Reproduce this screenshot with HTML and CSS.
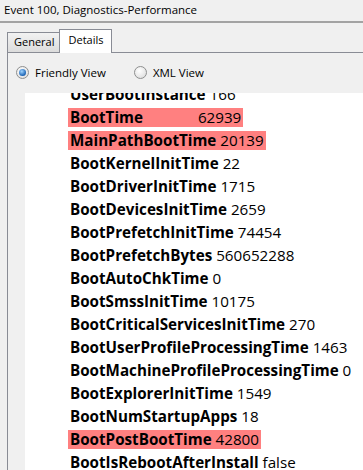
FILE: index.html
```html
<!doctype html>
<html>
<head>
<meta name="viewport" content="width=device-width">
<link rel="stylesheet" href="styles.css">
</head>
<body>
<div class="title">Event 100, Diagnostics-Performance</div>
<div class="tabs">
  <span class="tab">General</span>
  <span class="tab on">Details</span>
</div>
<div class="panel">
  <div class="views">
    <label class="view"><span class="radio checked"></span>Friendly View</label>
    <label class="view"><span class="radio"></span>XML View</label>
  </div>
  <div class="xml">
    <div class="list">
      <div class="row"><span class="item"><b>UserBootInstance</b> 166</span></div>
      <div class="row"><span class="item hot"><b>BootTime</b> <span class="far">62939</span></span></div>
      <div class="row"><span class="item hot"><b>MainPathBootTime</b> 20139</span></div>
      <div class="row"><span class="item"><b>BootKernelInitTime</b> 22</span></div>
      <div class="row"><span class="item"><b>BootDriverInitTime</b> 1715</span></div>
      <div class="row"><span class="item"><b>BootDevicesInitTime</b> 2659</span></div>
      <div class="row"><span class="item"><b>BootPrefetchInitTime</b> 74454</span></div>
      <div class="row"><span class="item"><b>BootPrefetchBytes</b> 560652288</span></div>
      <div class="row"><span class="item"><b>BootAutoChkTime</b> 0</span></div>
      <div class="row"><span class="item"><b>BootSmssInitTime</b> 10175</span></div>
      <div class="row"><span class="item"><b>BootCriticalServicesInitTime</b> 270</span></div>
      <div class="row"><span class="item"><b>BootUserProfileProcessingTime</b> 1463</span></div>
      <div class="row"><span class="item"><b>BootMachineProfileProcessingTime</b> 0</span></div>
      <div class="row"><span class="item"><b>BootExplorerInitTime</b> 1549</span></div>
      <div class="row"><span class="item"><b>BootNumStartupApps</b> 18</span></div>
      <div class="row"><span class="item hot"><b>BootPostBootTime</b> 42800</span></div>
      <div class="row"><span class="item"><b>BootIsRebootAfterInstall</b> false</span></div>
    </div>
  </div>
</div>
</body>
</html>
```
FILE: styles.css
```css
html,body{margin:0; padding:0; height:100%; overflow:hidden}
body{display:flex; flex-direction:column; background:#f0f0f0; color:#000; font:normal 11.5px "Open Sans", "DejaVu Sans", sans-serif}
.title{flex:none; height:21px; line-height:20px; padding-left:4px; border-bottom:2px solid #a3a3a3; white-space:nowrap}
.tabs{flex:none; display:flex; align-items:flex-end; padding:6px 0 0 7px; height:23px; position:relative; z-index:1; font-size:11px}
.tab{box-sizing:border-box; height:20px; line-height:18px; padding:0 5px 0 6px; border:1px solid #898c95; border-bottom:none; background:linear-gradient(#f2f2f2,#dcdcdc)}
.tab.on{height:24px; line-height:20px; margin-bottom:-1px; background:#fff; padding:0 8px; margin-left:-1px}
.panel{flex:1; display:flex; flex-direction:column; margin-left:7px; border-left:1px solid #898c95; border-top:1px solid #898c95; min-height:0}
.views{flex:none; display:flex; align-items:center; height:38px; margin-bottom:2px; padding-left:8px}
.view{display:flex; align-items:center; margin-right:28px}
.radio{box-sizing:border-box; width:13px; height:13px; border-radius:50%; border:1px solid #8e8f8f; background:radial-gradient(circle at 40% 35%, #fff, #d8d8d8); margin-right:6px; display:flex; align-items:center; justify-content:center}
.radio.checked::after{content:""; width:7px; height:7px; border-radius:50%; background:radial-gradient(circle at 40% 35%, #9fd4ff, #1a62b4 70%, #0e3f7d)}
.xml{flex:1; background:#fff; margin-left:17px; overflow:hidden}
.list{margin-top:-10px; padding-left:43px; font:normal 15.2px "Open Sans", sans-serif}
.row{height:23px; display:flex; align-items:center; white-space:nowrap}
.item{display:inline-block; height:19px; line-height:19px; padding:0 2px}
.item b{font-weight:bold}
.hot{background:#ff8080}
.far{margin-left:51px}
```
